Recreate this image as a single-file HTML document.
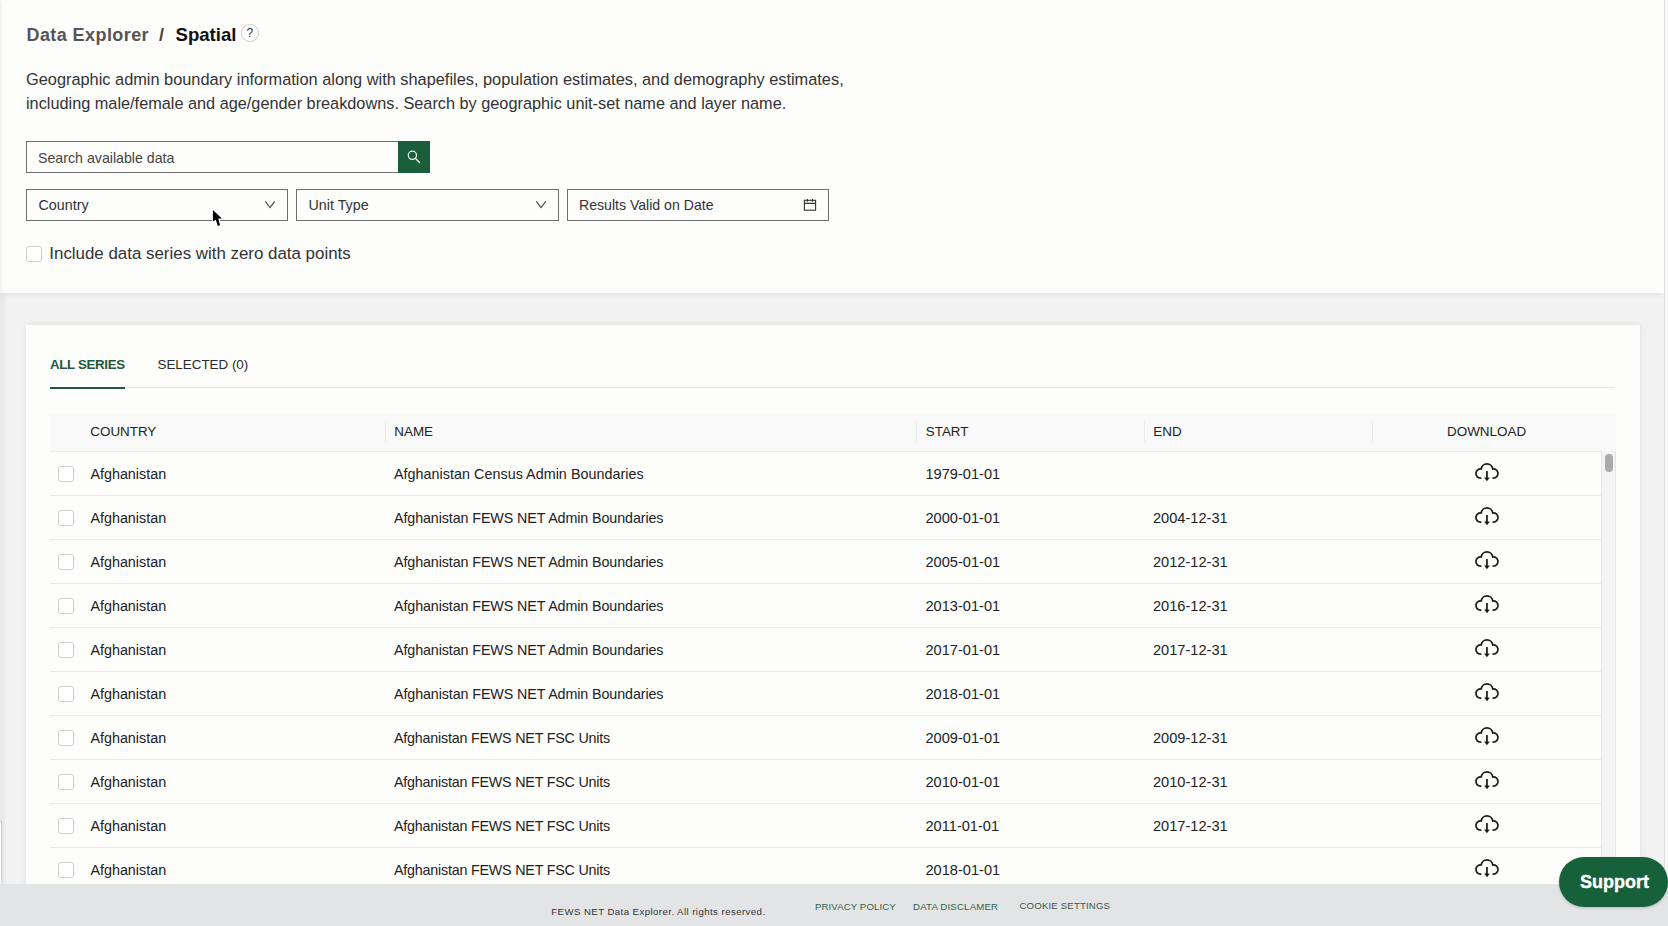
<!DOCTYPE html>
<html><head><meta charset="utf-8">
<style>
html,body{margin:0;padding:0;}
body{width:1668px;height:926px;overflow:hidden;position:relative;background:#f2f2f2;font-family:"Liberation Sans",sans-serif;color:#222;}
.t{position:absolute;white-space:nowrap;}
#edge{position:absolute;left:0;top:0;width:2px;height:926px;background:#f9f9fa;}
#panel{position:absolute;left:2px;top:0;width:1662px;height:293px;background:#fdfdfc;box-shadow:0 1px 5px rgba(0,0,0,0.09);}
#rstrip{position:absolute;left:1664px;top:0;width:4px;height:926px;background:#f8f8f8;border-left:1px solid #e0e0e0;box-sizing:border-box;}
.box{position:absolute;box-sizing:border-box;border:1px solid #6e6e6e;background:#fdfdfc;}
#card{position:absolute;left:26px;top:325px;width:1614px;height:600px;background:#fdfdfc;box-shadow:0 0 5px rgba(0,0,0,0.10);}
.sep{position:absolute;left:50px;width:1551px;height:1px;background:#e8e8e8;}
.cb{position:absolute;width:16px;height:16px;box-sizing:border-box;border:1px solid #cdcdcd;border-radius:3px;background:#fff;}
.vsep{position:absolute;top:421px;width:1px;height:21px;background:#ebebeb;}
#footer{position:absolute;left:0;top:884px;width:1668px;height:42px;background:#e3e4e6;}
</style></head><body>
<div id="edge"></div>
<div style="position:absolute;left:0;top:821px;width:2px;height:59px;background:#fff;border-top:1px solid #cfcfcf;border-right:1px solid #d8d8d8;box-sizing:border-box"></div>
<div style="position:absolute;left:1px;top:293px;width:6px;height:591px;background:linear-gradient(to right,rgba(0,0,0,0.09) 0,rgba(0,0,0,0.05) 1px,rgba(0,0,0,0) 6px)"></div>
<div style="position:absolute;left:0;top:293px;width:2px;height:528px;background:#e8e8e8"></div>
<div id="panel"></div>
<div id="rstrip"></div>
<div class="t" style="left:26.5px;top:26.06px;font-size:18px;line-height:18px;font-weight:bold;color:#555;letter-spacing:0.42px">Data Explorer</div>

<div class="t" style="left:159px;top:26.06px;font-size:18px;line-height:18px;font-weight:bold;color:#444">/</div>

<div class="t" style="left:175.5px;top:25.56px;font-size:18.6px;line-height:18.6px;font-weight:bold;color:#111">Spatial</div>

<div style="position:absolute;left:241px;top:24px;width:17.5px;height:17.5px;box-sizing:border-box;border:1px solid #cdcdcd;border-radius:50%"></div>
<div class="t" style="left:246.6px;top:27.44px;font-size:12px;line-height:12px;color:#333">?</div>

<div class="t" style="left:26px;top:70.96px;font-size:16.35px;line-height:16.35px;color:#333">Geographic admin boundary information along with shapefiles, population estimates, and demography estimates,</div>

<div class="t" style="left:26px;top:94.50px;font-size:16.3px;line-height:16.3px;color:#333">including male/female and age/gender breakdowns. Search by geographic unit-set name and layer name.</div>

<div class="box" style="left:26px;top:141px;width:373px;height:32px"></div>
<div class="t" style="left:38px;top:151.08px;font-size:14.2px;line-height:14.2px;color:#444">Search available data</div>

<div style="position:absolute;left:398px;top:141px;width:32px;height:32px;background:#1b5e3b"></div>
<svg style="position:absolute;left:398px;top:141px" width="32" height="32" viewBox="0 0 32 32"><circle cx="14.4" cy="14.3" r="4.1" fill="none" stroke="#e3f3ea" stroke-width="1.3"/><path d="M17.4 17.3L21.9 22" stroke="#e3f3ea" stroke-width="1.4"/></svg>
<div class="box" style="left:26px;top:189px;width:262px;height:32px"></div>
<div class="t" style="left:38.5px;top:197.70px;font-size:14.3px;line-height:14.3px;color:#333">Country</div>

<svg style="position:absolute;left:264px;top:199px" width="12" height="11" viewBox="0 0 12 11"><path d="M1.3 2.3L6 8.5L10.7 2.3" fill="none" stroke="#444" stroke-width="1.1"/></svg>
<div class="box" style="left:296px;top:189px;width:263px;height:32px"></div>
<div class="t" style="left:308.5px;top:197.90px;font-size:14.3px;line-height:14.3px;color:#333">Unit Type</div>

<svg style="position:absolute;left:535px;top:199px" width="12" height="11" viewBox="0 0 12 11"><path d="M1.3 2.3L6 8.5L10.7 2.3" fill="none" stroke="#444" stroke-width="1.1"/></svg>
<div class="box" style="left:567px;top:189px;width:262px;height:32px"></div>
<div class="t" style="left:579px;top:198.16px;font-size:14.1px;line-height:14.1px;color:#333">Results Valid on Date</div>

<svg style="position:absolute;left:803px;top:199px" width="14" height="13" viewBox="0 0 14 13"><rect x="1.4" y="1.3" width="11.2" height="9.9" fill="none" stroke="#333" stroke-width="1.1"/><path d="M1.4 4.4H12.6M4.4 -0.2V2.7M9.5 -0.2V2.7" stroke="#333" stroke-width="1.1"/></svg>
<svg style="position:absolute;left:211px;top:208px" width="14" height="21" viewBox="0 0 14 21"><path d="M1.9 2V13.5L4.8 11.7L6.8 17.9L9 17.3L7.3 10.6L10.9 10.5Z" fill="#000" stroke="#fff" stroke-width="1.8" stroke-linejoin="round" paint-order="stroke"/></svg>
<div class="cb" style="left:26px;top:246px;"></div>
<div class="t" style="left:49.3px;top:245.89px;font-size:16.9px;line-height:16.9px;color:#333">Include data series with zero data points</div>

<div id="card"></div>
<div class="t" style="left:50px;top:358.14px;font-size:13.3px;line-height:13.3px;font-weight:bold;color:#1f5a3c;letter-spacing:-0.33px">ALL SERIES</div>

<div class="t" style="left:157.5px;top:358.06px;font-size:13.4px;line-height:13.4px;color:#2a2a2a">SELECTED (0)</div>

<div style="position:absolute;left:50px;top:387px;width:1565px;height:1px;background:#e3e3e3"></div>
<div style="position:absolute;left:50px;top:387px;width:75px;height:2px;background:#1f5a3c"></div>
<div style="position:absolute;left:50px;top:414px;width:1566px;height:38px;background:#f9f9f9;border-bottom:1px solid #e8e8e8;box-sizing:border-box"></div>
<div class="vsep" style="left:385px"></div>
<div class="vsep" style="left:916px"></div>
<div class="vsep" style="left:1144px"></div>
<div class="vsep" style="left:1372px"></div>
<div class="t" style="left:90.3px;top:425.06px;font-size:13.4px;line-height:13.4px;color:#222">COUNTRY</div>

<div class="t" style="left:394.3px;top:425.06px;font-size:13.4px;line-height:13.4px;color:#222">NAME</div>

<div class="t" style="left:925.8px;top:425.06px;font-size:13.4px;line-height:13.4px;color:#222">START</div>

<div class="t" style="left:1153.3px;top:425.06px;font-size:13.4px;line-height:13.4px;color:#222">END</div>

<div class="t" style="left:1447px;top:425.01px;font-size:13.45px;line-height:13.45px;color:#222">DOWNLOAD</div>

<div class="cb" style="left:58px;top:466px"></div>
<div class="t" style="left:90.4px;top:466.65px;font-size:14.35px;line-height:14.35px;">Afghanistan</div>
<div class="t" style="left:394px;top:466.70px;font-size:14.3px;line-height:14.3px;letter-spacing:0.05px">Afghanistan Census Admin Boundaries</div>
<div class="t" style="left:925.5px;top:466.94px;font-size:14.6px;line-height:14.6px;">1979-01-01</div>
<div style="position:absolute;left:1474px;top:462.6px;width:26px;height:20px"><svg width="26" height="20" viewBox="0 0 26 20"><path d="M7.40 15.00H6.50A4.55 4.55 0 1 1 7.16 5.95A5.85 5.85 0 0 1 18.74 5.95A4.55 4.55 0 1 1 19.40 15.00H18.50" fill="none" stroke="#1b1b1b" stroke-width="1.75"/><path d="M12.95 7.9V15.5" stroke="#1b1b1b" stroke-width="1.75"/><path d="M10.10 14.6H15.80L12.95 18.2Z" fill="#1b1b1b"/></svg></div>
<div class="sep" style="top:495px"></div>
<div class="cb" style="left:58px;top:510px"></div>
<div class="t" style="left:90.4px;top:510.65px;font-size:14.35px;line-height:14.35px;">Afghanistan</div>
<div class="t" style="left:394px;top:510.70px;font-size:14.3px;line-height:14.3px;letter-spacing:-0.1px">Afghanistan FEWS NET Admin Boundaries</div>
<div class="t" style="left:925.5px;top:510.94px;font-size:14.6px;line-height:14.6px;">2000-01-01</div>
<div class="t" style="left:1153px;top:510.94px;font-size:14.6px;line-height:14.6px;">2004-12-31</div>
<div style="position:absolute;left:1474px;top:506.6px;width:26px;height:20px"><svg width="26" height="20" viewBox="0 0 26 20"><path d="M7.40 15.00H6.50A4.55 4.55 0 1 1 7.16 5.95A5.85 5.85 0 0 1 18.74 5.95A4.55 4.55 0 1 1 19.40 15.00H18.50" fill="none" stroke="#1b1b1b" stroke-width="1.75"/><path d="M12.95 7.9V15.5" stroke="#1b1b1b" stroke-width="1.75"/><path d="M10.10 14.6H15.80L12.95 18.2Z" fill="#1b1b1b"/></svg></div>
<div class="sep" style="top:539px"></div>
<div class="cb" style="left:58px;top:554px"></div>
<div class="t" style="left:90.4px;top:554.65px;font-size:14.35px;line-height:14.35px;">Afghanistan</div>
<div class="t" style="left:394px;top:554.70px;font-size:14.3px;line-height:14.3px;letter-spacing:-0.1px">Afghanistan FEWS NET Admin Boundaries</div>
<div class="t" style="left:925.5px;top:554.94px;font-size:14.6px;line-height:14.6px;">2005-01-01</div>
<div class="t" style="left:1153px;top:554.94px;font-size:14.6px;line-height:14.6px;">2012-12-31</div>
<div style="position:absolute;left:1474px;top:550.6px;width:26px;height:20px"><svg width="26" height="20" viewBox="0 0 26 20"><path d="M7.40 15.00H6.50A4.55 4.55 0 1 1 7.16 5.95A5.85 5.85 0 0 1 18.74 5.95A4.55 4.55 0 1 1 19.40 15.00H18.50" fill="none" stroke="#1b1b1b" stroke-width="1.75"/><path d="M12.95 7.9V15.5" stroke="#1b1b1b" stroke-width="1.75"/><path d="M10.10 14.6H15.80L12.95 18.2Z" fill="#1b1b1b"/></svg></div>
<div class="sep" style="top:583px"></div>
<div class="cb" style="left:58px;top:598px"></div>
<div class="t" style="left:90.4px;top:598.65px;font-size:14.35px;line-height:14.35px;">Afghanistan</div>
<div class="t" style="left:394px;top:598.70px;font-size:14.3px;line-height:14.3px;letter-spacing:-0.1px">Afghanistan FEWS NET Admin Boundaries</div>
<div class="t" style="left:925.5px;top:598.94px;font-size:14.6px;line-height:14.6px;">2013-01-01</div>
<div class="t" style="left:1153px;top:598.94px;font-size:14.6px;line-height:14.6px;">2016-12-31</div>
<div style="position:absolute;left:1474px;top:594.6px;width:26px;height:20px"><svg width="26" height="20" viewBox="0 0 26 20"><path d="M7.40 15.00H6.50A4.55 4.55 0 1 1 7.16 5.95A5.85 5.85 0 0 1 18.74 5.95A4.55 4.55 0 1 1 19.40 15.00H18.50" fill="none" stroke="#1b1b1b" stroke-width="1.75"/><path d="M12.95 7.9V15.5" stroke="#1b1b1b" stroke-width="1.75"/><path d="M10.10 14.6H15.80L12.95 18.2Z" fill="#1b1b1b"/></svg></div>
<div class="sep" style="top:627px"></div>
<div class="cb" style="left:58px;top:642px"></div>
<div class="t" style="left:90.4px;top:642.65px;font-size:14.35px;line-height:14.35px;">Afghanistan</div>
<div class="t" style="left:394px;top:642.70px;font-size:14.3px;line-height:14.3px;letter-spacing:-0.1px">Afghanistan FEWS NET Admin Boundaries</div>
<div class="t" style="left:925.5px;top:642.94px;font-size:14.6px;line-height:14.6px;">2017-01-01</div>
<div class="t" style="left:1153px;top:642.94px;font-size:14.6px;line-height:14.6px;">2017-12-31</div>
<div style="position:absolute;left:1474px;top:638.6px;width:26px;height:20px"><svg width="26" height="20" viewBox="0 0 26 20"><path d="M7.40 15.00H6.50A4.55 4.55 0 1 1 7.16 5.95A5.85 5.85 0 0 1 18.74 5.95A4.55 4.55 0 1 1 19.40 15.00H18.50" fill="none" stroke="#1b1b1b" stroke-width="1.75"/><path d="M12.95 7.9V15.5" stroke="#1b1b1b" stroke-width="1.75"/><path d="M10.10 14.6H15.80L12.95 18.2Z" fill="#1b1b1b"/></svg></div>
<div class="sep" style="top:671px"></div>
<div class="cb" style="left:58px;top:686px"></div>
<div class="t" style="left:90.4px;top:686.65px;font-size:14.35px;line-height:14.35px;">Afghanistan</div>
<div class="t" style="left:394px;top:686.70px;font-size:14.3px;line-height:14.3px;letter-spacing:-0.1px">Afghanistan FEWS NET Admin Boundaries</div>
<div class="t" style="left:925.5px;top:686.94px;font-size:14.6px;line-height:14.6px;">2018-01-01</div>
<div style="position:absolute;left:1474px;top:682.6px;width:26px;height:20px"><svg width="26" height="20" viewBox="0 0 26 20"><path d="M7.40 15.00H6.50A4.55 4.55 0 1 1 7.16 5.95A5.85 5.85 0 0 1 18.74 5.95A4.55 4.55 0 1 1 19.40 15.00H18.50" fill="none" stroke="#1b1b1b" stroke-width="1.75"/><path d="M12.95 7.9V15.5" stroke="#1b1b1b" stroke-width="1.75"/><path d="M10.10 14.6H15.80L12.95 18.2Z" fill="#1b1b1b"/></svg></div>
<div class="sep" style="top:715px"></div>
<div class="cb" style="left:58px;top:730px"></div>
<div class="t" style="left:90.4px;top:730.65px;font-size:14.35px;line-height:14.35px;">Afghanistan</div>
<div class="t" style="left:394px;top:730.70px;font-size:14.3px;line-height:14.3px;letter-spacing:-0.21px">Afghanistan FEWS NET FSC Units</div>
<div class="t" style="left:925.5px;top:730.94px;font-size:14.6px;line-height:14.6px;">2009-01-01</div>
<div class="t" style="left:1153px;top:730.94px;font-size:14.6px;line-height:14.6px;">2009-12-31</div>
<div style="position:absolute;left:1474px;top:726.6px;width:26px;height:20px"><svg width="26" height="20" viewBox="0 0 26 20"><path d="M7.40 15.00H6.50A4.55 4.55 0 1 1 7.16 5.95A5.85 5.85 0 0 1 18.74 5.95A4.55 4.55 0 1 1 19.40 15.00H18.50" fill="none" stroke="#1b1b1b" stroke-width="1.75"/><path d="M12.95 7.9V15.5" stroke="#1b1b1b" stroke-width="1.75"/><path d="M10.10 14.6H15.80L12.95 18.2Z" fill="#1b1b1b"/></svg></div>
<div class="sep" style="top:759px"></div>
<div class="cb" style="left:58px;top:774px"></div>
<div class="t" style="left:90.4px;top:774.65px;font-size:14.35px;line-height:14.35px;">Afghanistan</div>
<div class="t" style="left:394px;top:774.70px;font-size:14.3px;line-height:14.3px;letter-spacing:-0.21px">Afghanistan FEWS NET FSC Units</div>
<div class="t" style="left:925.5px;top:774.94px;font-size:14.6px;line-height:14.6px;">2010-01-01</div>
<div class="t" style="left:1153px;top:774.94px;font-size:14.6px;line-height:14.6px;">2010-12-31</div>
<div style="position:absolute;left:1474px;top:770.6px;width:26px;height:20px"><svg width="26" height="20" viewBox="0 0 26 20"><path d="M7.40 15.00H6.50A4.55 4.55 0 1 1 7.16 5.95A5.85 5.85 0 0 1 18.74 5.95A4.55 4.55 0 1 1 19.40 15.00H18.50" fill="none" stroke="#1b1b1b" stroke-width="1.75"/><path d="M12.95 7.9V15.5" stroke="#1b1b1b" stroke-width="1.75"/><path d="M10.10 14.6H15.80L12.95 18.2Z" fill="#1b1b1b"/></svg></div>
<div class="sep" style="top:803px"></div>
<div class="cb" style="left:58px;top:818px"></div>
<div class="t" style="left:90.4px;top:818.65px;font-size:14.35px;line-height:14.35px;">Afghanistan</div>
<div class="t" style="left:394px;top:818.70px;font-size:14.3px;line-height:14.3px;letter-spacing:-0.21px">Afghanistan FEWS NET FSC Units</div>
<div class="t" style="left:925.5px;top:818.94px;font-size:14.6px;line-height:14.6px;">2011-01-01</div>
<div class="t" style="left:1153px;top:818.94px;font-size:14.6px;line-height:14.6px;">2017-12-31</div>
<div style="position:absolute;left:1474px;top:814.6px;width:26px;height:20px"><svg width="26" height="20" viewBox="0 0 26 20"><path d="M7.40 15.00H6.50A4.55 4.55 0 1 1 7.16 5.95A5.85 5.85 0 0 1 18.74 5.95A4.55 4.55 0 1 1 19.40 15.00H18.50" fill="none" stroke="#1b1b1b" stroke-width="1.75"/><path d="M12.95 7.9V15.5" stroke="#1b1b1b" stroke-width="1.75"/><path d="M10.10 14.6H15.80L12.95 18.2Z" fill="#1b1b1b"/></svg></div>
<div class="sep" style="top:847px"></div>
<div class="cb" style="left:58px;top:862px"></div>
<div class="t" style="left:90.4px;top:862.65px;font-size:14.35px;line-height:14.35px;">Afghanistan</div>
<div class="t" style="left:394px;top:862.70px;font-size:14.3px;line-height:14.3px;letter-spacing:-0.21px">Afghanistan FEWS NET FSC Units</div>
<div class="t" style="left:925.5px;top:862.94px;font-size:14.6px;line-height:14.6px;">2018-01-01</div>
<div style="position:absolute;left:1474px;top:858.6px;width:26px;height:20px"><svg width="26" height="20" viewBox="0 0 26 20"><path d="M7.40 15.00H6.50A4.55 4.55 0 1 1 7.16 5.95A5.85 5.85 0 0 1 18.74 5.95A4.55 4.55 0 1 1 19.40 15.00H18.50" fill="none" stroke="#1b1b1b" stroke-width="1.75"/><path d="M12.95 7.9V15.5" stroke="#1b1b1b" stroke-width="1.75"/><path d="M10.10 14.6H15.80L12.95 18.2Z" fill="#1b1b1b"/></svg></div>

<div style="position:absolute;left:1601px;top:451px;width:15px;height:433px;background:#f4f4f4;border-left:1px solid #e6e6e6;border-right:1px solid #e6e6e6;box-sizing:border-box"></div>
<div style="position:absolute;left:1605px;top:454px;width:8px;height:18px;border-radius:4px;background:#ababab"></div>
<div id="footer"></div>
<div class="t" style="left:551.3px;top:906.67px;font-size:9.6px;line-height:9.6px;color:#333;letter-spacing:0.45px">FEWS NET Data Explorer. All rights reserved.</div>

<div class="t" style="left:815px;top:902.07px;font-size:9.6px;line-height:9.6px;color:#2f6548;letter-spacing:0.12px">PRIVACY POLICY</div>

<div class="t" style="left:913px;top:902.07px;font-size:9.6px;line-height:9.6px;color:#2f6548;letter-spacing:0.21px">DATA DISCLAMER</div>

<div class="t" style="left:1019.5px;top:901.47px;font-size:9.6px;line-height:9.6px;color:#3d5548;letter-spacing:0.18px">COOKIE SETTINGS</div>

<div style="position:absolute;left:1559px;top:857px;width:109px;height:50px;border-radius:25px;background:#17613a;box-shadow:0 1px 3px rgba(0,0,0,0.2)"></div>
<div class="t" style="left:1580px;top:872.56px;font-size:18px;line-height:18px;font-weight:bold;color:#fff;-webkit-text-stroke:0.35px #fff">Support</div>

</body></html>
